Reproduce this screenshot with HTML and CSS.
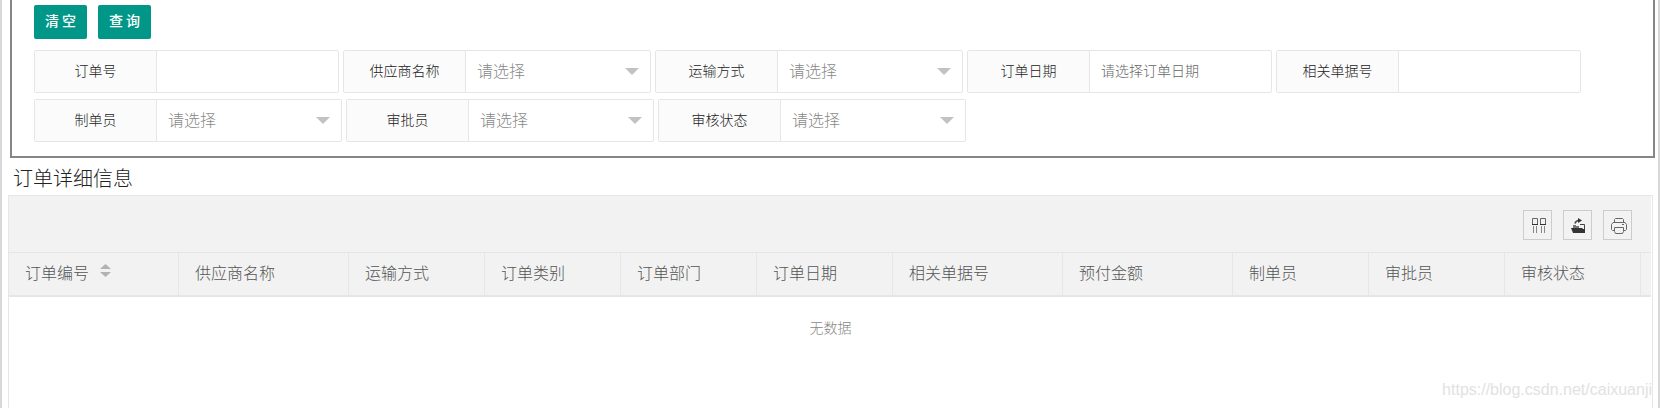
FILE: index.html
```html
<!DOCTYPE html>
<html lang="zh-CN">
<head>
  <meta charset="UTF-8">
  <meta name="viewport" content="width=device-width, initial-scale=1.0">
  <title>订单详细信息</title>
  <link rel="stylesheet" href="styles.css">
</head>
<body>
  <form class="search-panel">
    <div class="actions">
      <button type="reset" class="btn">清空</button>
      <button type="button" class="btn">查询</button>
    </div>

    <div class="form-row">
      <div class="field">
        <label for="orderNo">订单号</label>
        <input type="text" id="orderNo">
      </div>
      <div class="field field-select">
        <label for="supplier">供应商名称</label>
        <div class="select-box">
          <select id="supplier"><option>请选择</option></select>
        </div>
      </div>
      <div class="field field-select">
        <label for="transport">运输方式</label>
        <div class="select-box">
          <select id="transport"><option>请选择</option></select>
        </div>
      </div>
      <div class="field">
        <label for="orderDate">订单日期</label>
        <input type="text" id="orderDate" placeholder="请选择订单日期">
      </div>
      <div class="field">
        <label for="relatedNo">相关单据号</label>
        <input type="text" id="relatedNo">
      </div>
    </div>

    <div class="form-row">
      <div class="field field-select">
        <label for="creator">制单员</label>
        <div class="select-box">
          <select id="creator"><option>请选择</option></select>
        </div>
      </div>
      <div class="field field-select">
        <label for="approver">审批员</label>
        <div class="select-box">
          <select id="approver"><option>请选择</option></select>
        </div>
      </div>
      <div class="field field-select">
        <label for="status">审核状态</label>
        <div class="select-box">
          <select id="status"><option>请选择</option></select>
        </div>
      </div>
    </div>
  </form>

  <h2>订单详细信息</h2>

  <div class="table-view">
    <div class="toolbar">
      <button type="button" class="tool" aria-label="筛选列">
        <svg width="17" height="16" viewBox="0 0 17 16" fill="none" stroke="#666">
          <path d="M2.500 .500h5v6h-5zM10.500 .500h5v6h-5z"/>
          <path d="M2 6.500h6M10 6.500h6" stroke="#333"/>
          <path d="M3.500 8v7M6.500 8v7M11.500 8v7M14.500 8v7" stroke="#888"/>
        </svg>
      </button>
      <button type="button" class="tool" aria-label="导出">
        <svg width="17" height="16" viewBox="0 0 17 16">
          <path d="M3 9V7h3v1h3v2H3z" fill="#777"/>
          <path d="M10 6.500h4.500V14" fill="none" stroke="#444"/>
          <path d="M1 10h11l1 1h2v4H3z" fill="#333"/>
          <path d="M5 5.500C5.500 3.500 7 2.500 9 2.500" fill="none" stroke="#444" stroke-width="1.500"/>
          <path d="M8 0l4 2.500L8 5z" fill="#333"/>
        </svg>
      </button>
      <button type="button" class="tool" aria-label="打印">
        <svg width="17" height="16" viewBox="0 0 17 16" fill="none" stroke="#666">
          <path d="M4.500 4.500v-3l1-1h7l1 1v3M4.500 12.500h-2l-1-1v-5l1.500-2h12l1.500 2v5l-1 1h-2"/>
          <path d="M4.500 9.500h9v4l-1 2h-7l-1-2zM12 6.500h2"/>
        </svg>
      </button>
    </div>

    <table>
      <colgroup>
        <col class="col-wide">
        <col class="col-wide">
        <col class="col">
        <col class="col">
        <col class="col">
        <col class="col">
        <col class="col-wide">
        <col class="col-wide">
        <col class="col">
        <col class="col">
        <col class="col">
        <col>
      </colgroup>
      <thead>
        <tr>
          <th>
            <span class="sortable">订单编号
              <svg width="11" height="13" viewBox="0 0 11 13" fill="#b2b2b2">
                <path d="M0 5L5.500 0 11 5zM0 8h11L5.500 13z"/>
              </svg>
            </span>
          </th>
          <th>供应商名称</th>
          <th>运输方式</th>
          <th>订单类别</th>
          <th>订单部门</th>
          <th>订单日期</th>
          <th>相关单据号</th>
          <th>预付金额</th>
          <th>制单员</th>
          <th>审批员</th>
          <th>审核状态</th>
          <td></td>
        </tr>
      </thead>
    </table>
    <p class="empty">无数据</p>
  </div>

  <div class="watermark">https://blog.csdn.net/caixuanji</div>
</body>
</html>
```
FILE: styles.css
```css
* {
  box-sizing: border-box;
}
body {
  display: flex;
  flex-direction: column;
  min-height: 100vh;
  margin: 0;
  border: solid #d8d8d8;
  border-width: 0 2px;
  background-color: #fff;
  color: #222;
  font-family: "Noto Sans CJK SC", sans-serif;
  font-size: 14px;
  font-weight: 300;
}
button, input, select {
  font-family: inherit;
  font-weight: inherit;
}
.search-panel {
  margin: 0 3px 0 8px;
  padding: 5px 22px 14px;
  border: 2px solid #868686;
  border-top: none;
}
.actions {
  display: flex;
  gap: 11px;
  margin-bottom: 11px;
}
.btn {
  height: 34px;
  padding: 0 8px 4px 11px;
  border: none;
  border-radius: 2px;
  background-color: #009688;
  color: #fff;
  font-size: 14px;
  font-weight: 500;
  letter-spacing: 3px;
  cursor: pointer;
}
.form-row {
  display: flex;
  gap: 4px;
}
.form-row + .form-row {
  margin-top: 6px;
}
.field {
  display: flex;
  width: 305px;
  height: 43px;
  border: 1px solid #e6e6e6;
  border-radius: 2px;
}
.field-select {
  width: 308px;
}
.field label {
  flex: none;
  width: 122px;
  border-right: 1px solid #e6e6e6;
  background-color: #fbfbfb;
  line-height: 39px;
  text-align: center;
}
.field input {
  flex: 1;
  min-width: 0;
  padding: 0 11px 4px;
  border: none;
  background: none;
  font-size: 14px;
}
.field input::placeholder {
  color: #666;
}
.select-box {
  display: grid;
  flex: 1;
  align-items: center;
}
.select-box select,
.select-box::after {
  grid-area: 1 / 1;
}
.select-box select {
  height: 100%;
  padding: 0 11px 3px;
  border: none;
  appearance: none;
  background: none;
  color: #888;
  font-size: 16px;
}
.select-box::after {
  content: "";
  justify-self: end;
  margin-right: 11px;
  border: 7px solid transparent;
  border-top-color: #c2c2c2;
  border-bottom: none;
  pointer-events: none;
}
h2 {
  margin: 0 11px;
  padding-top: 2px;
  font-size: 20px;
  font-weight: 300;
  line-height: 35px;
}
.table-view {
  flex: 1;
  margin: 0 5px 0 6px;
  border: solid #e6e6e6;
  border-width: 1px 1px 0;
}
.toolbar {
  display: flex;
  justify-content: flex-end;
  gap: 11px;
  margin-right: 1px;
  padding: 14px 19px 12px;
  background-color: #f2f2f2;
}
.tool {
  display: flex;
  align-items: center;
  justify-content: center;
  width: 29px;
  height: 30px;
  padding: 2px 0 0 2px;
  border: 1px solid #ccc;
  background: none;
  cursor: pointer;
}
table {
  width: calc(100% - 1px);
  table-layout: fixed;
  border-spacing: 0;
  background-color: #f2f2f2;
}
.col-wide {
  width: 170px;
}
.col {
  width: 136px;
}
th, td {
  height: 45px;
  padding: 0 16px 4px;
  border: solid #e6e6e6;
  border-width: 1px 1px 2px 0;
  color: #555;
  font-size: 16px;
  font-weight: 300;
  text-align: left;
}
td {
  padding: 0;
  border-right: none;
}
.sortable {
  display: flex;
  align-items: center;
  gap: 11px;
}
.sortable svg {
  margin-bottom: 3px;
}
.empty {
  margin: 0;
  padding-top: 19px;
  color: #888;
  line-height: 22px;
  text-align: center;
}
.watermark {
  position: absolute;
  right: 8px;
  bottom: 9px;
  color: #e2e2e2;
  font-family: "Liberation Sans", sans-serif;
  font-size: 16px;
  font-weight: 400;
}
```
